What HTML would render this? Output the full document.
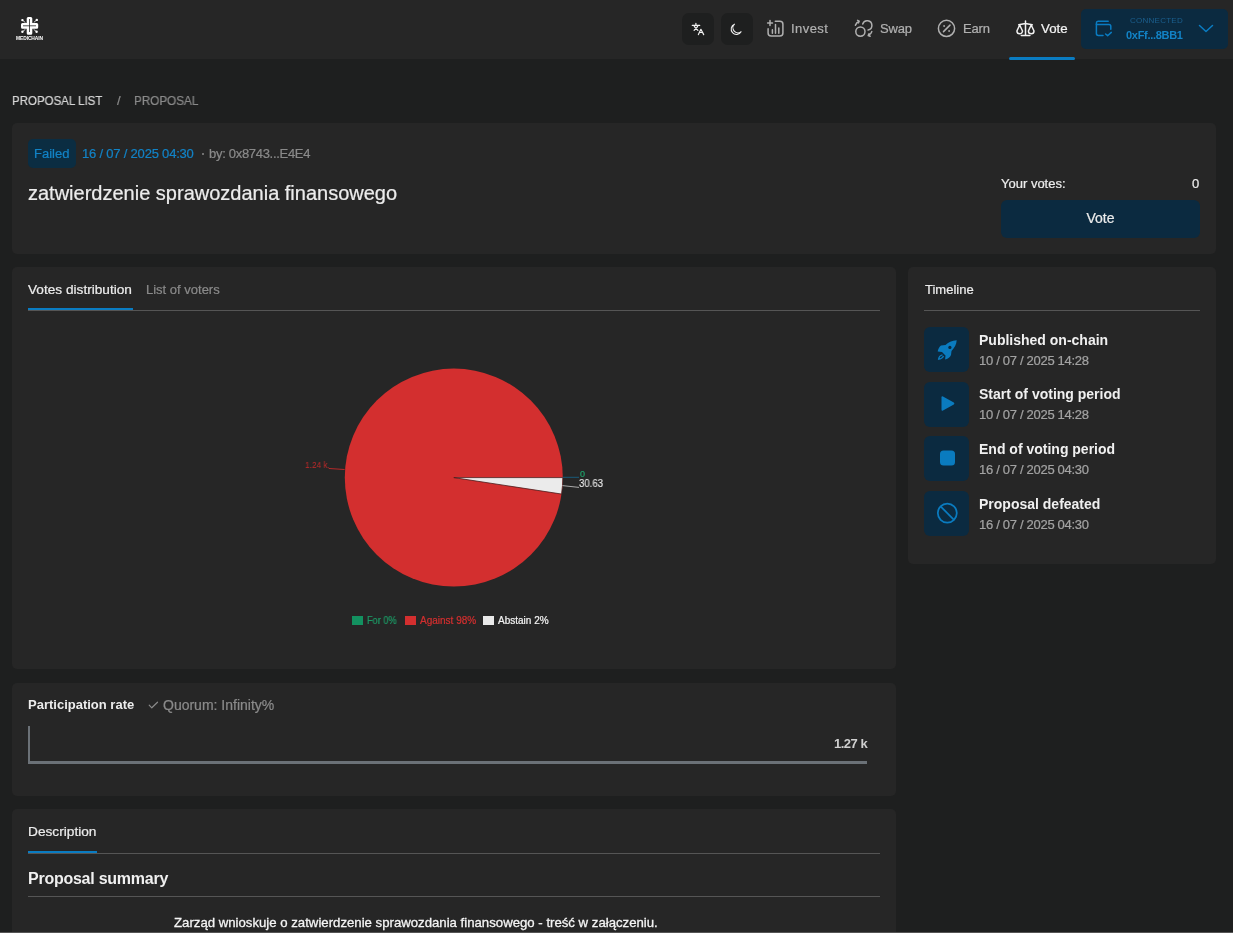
<!DOCTYPE html>
<html><head><meta charset="utf-8">
<style>
*{box-sizing:border-box;margin:0;padding:0}
html,body{width:1233px;height:933px;overflow:hidden;-webkit-font-smoothing:antialiased;background:#1e1f1f;font-family:"Liberation Sans",sans-serif;color:#e9e9e9}
.abs{position:absolute}
#hdr{position:absolute;left:0;top:0;width:1233px;height:59px;background:#262626}
.card{position:absolute;background:#262626;border-radius:5px}
.t{position:absolute;white-space:nowrap;line-height:1}
.sqbtn{position:absolute;top:13px;width:32px;height:32px;border-radius:7px;background:#1e1f1f}
.tlbox{position:absolute;left:924px;width:45px;height:44.5px;border-radius:6px;background:#0b2a40}
.tlt{position:absolute;left:979px;white-space:nowrap;line-height:1;font-size:14px;font-weight:bold;color:#f0f0f0}
.tld{position:absolute;left:979px;white-space:nowrap;line-height:1;font-size:13px;color:#a3a3a3;letter-spacing:-0.3px}
#ov{position:absolute;left:0;top:0}
body>*{will-change:transform}
.t,.tld{-webkit-text-stroke:0.22px currentColor}
.t[style*="bold"]{-webkit-text-stroke:0}
</style></head><body>
<div id="hdr"></div>
<div class="sqbtn" style="left:682px"></div>
<div class="sqbtn" style="left:721px"></div>
<div class="t" style="left:791px;top:22px;font-size:13px;color:#b0b0b0;letter-spacing:0.45px">Invest</div>
<div class="t" style="left:879.5px;top:21.5px;font-size:13px;color:#b0b0b0;letter-spacing:-0.2px">Swap</div>
<div class="t" style="left:963px;top:21.5px;font-size:13px;color:#b0b0b0;letter-spacing:-0.2px">Earn</div>
<div class="t" style="left:1041px;top:21.5px;font-size:13.3px;color:#f2f2f2">Vote</div>
<div class="abs" style="left:1009px;top:57.4px;width:66px;height:3.3px;background:#0a7cc2;border-radius:2px"></div>
<div class="abs" style="left:1081px;top:9px;width:147px;height:40px;background:#0b2a40;border-radius:5px"></div>
<div class="t" style="left:1130px;top:17px;font-size:8px;color:#1b5f8e;letter-spacing:0.25px;-webkit-text-stroke:0">CONNECTED</div>
<div class="t" style="left:1126px;top:29.6px;font-size:11px;font-weight:bold;color:#1283c6;letter-spacing:-0.3px">0xFf...8BB1</div>

<div class="t" style="left:12px;top:94px;font-size:13px;color:#d6d6d6;transform:scaleX(0.885);transform-origin:0 0">PROPOSAL LIST</div>
<div class="t" style="left:117px;top:94px;font-size:13px;color:#8a8a8a">/</div>
<div class="t" style="left:134px;top:94px;font-size:13px;color:#8a8a8a;transform:scaleX(0.9);transform-origin:0 0">PROPOSAL</div>

<!-- card 1 -->
<div class="card" style="left:12px;top:123px;width:1204px;height:131px"></div>
<div class="abs" style="left:28px;top:139px;width:48px;height:29px;background:#0b2d42;border-radius:5px"></div>
<div class="t" style="left:34px;top:147px;font-size:13px;color:#1283c6">Failed</div>
<div class="t" style="left:82px;top:147px;font-size:13px;color:#1283c6;letter-spacing:-0.2px">16 / 07 / 2025 04:30</div>
<div class="abs" style="left:201.8px;top:152.6px;width:2.4px;height:2.4px;border-radius:1px;background:#8a8a8a"></div>
<div class="t" style="left:209px;top:147px;font-size:13px;color:#8a8a8a;letter-spacing:-0.3px">by: 0x8743...E4E4</div>
<div class="t" style="left:28px;top:183px;font-size:20px;color:#ececec">zatwierdzenie sprawozdania finansowego</div>
<div class="t" style="left:1001px;top:177px;font-size:13px;color:#ececec">Your votes:</div>
<div class="t" style="left:1192px;top:177px;font-size:13px;color:#ececec">0</div>
<div class="abs" style="left:1001px;top:200px;width:199px;height:38px;background:#0b2a40;border-radius:6px"></div>
<div class="t" style="left:1001px;top:211px;width:199px;text-align:center;font-size:14px;color:#ececec">Vote</div>

<!-- card 2 -->
<div class="card" style="left:12px;top:267px;width:884px;height:402px"></div>
<div class="t" style="left:28px;top:283px;font-size:13px;color:#ececec;transform:scaleX(1.05);transform-origin:0 0">Votes distribution</div>
<div class="t" style="left:146px;top:283px;font-size:13px;color:#8a8a8a">List of voters</div>
<div class="abs" style="left:28px;top:310px;width:852px;height:1px;background:#555"></div>
<div class="abs" style="left:28px;top:308px;width:105px;height:2px;background:#0a7cc2"></div>
<div class="t" style="left:305.3px;top:459.8px;font-size:9.8px;color:#c02a2a;-webkit-text-stroke:0;transform:scaleX(0.85);transform-origin:0 0">1.24 k</div>
<div class="t" style="left:579.5px;top:470.2px;font-size:9px;color:#1fa06a">0</div>
<div class="t" style="left:578.7px;top:478.5px;font-size:10px;color:#eeeeee;-webkit-text-stroke:0.1px;transform:scaleX(0.96);transform-origin:0 0">30.63</div>
<div class="abs" style="left:352px;top:616px;width:11px;height:9px;background:#139160"></div>
<div class="t" style="left:366.5px;top:616px;font-size:10px;color:#1d9a66;transform:scaleX(0.92);transform-origin:0 0">For 0%</div>
<div class="abs" style="left:405px;top:616px;width:11px;height:9px;background:#d32f2f"></div>
<div class="t" style="left:419.5px;top:616px;font-size:10px;color:#d32f2f">Against 98%</div>
<div class="abs" style="left:483px;top:616px;width:11px;height:9px;background:#e9e9e9"></div>
<div class="t" style="left:497.8px;top:616px;font-size:10px;color:#f2f2f2">Abstain 2%</div>

<!-- card 3 timeline -->
<div class="card" style="left:908px;top:267px;width:308px;height:297px"></div>
<div class="t" style="left:925px;top:282.7px;font-size:13px;color:#ececec">Timeline</div>
<div class="abs" style="left:924px;top:310px;width:276px;height:1px;background:#555"></div>
<div class="tlbox" style="top:327px"></div>
<div class="tlbox" style="top:381.6px"></div>
<div class="tlbox" style="top:436.2px"></div>
<div class="tlbox" style="top:490.8px"></div>
<div class="tlt" style="top:332.75px">Published on-chain</div>
<div class="tld" style="top:353.7px">10 / 07 / 2025 14:28</div>
<div class="tlt" style="top:387.35px">Start of voting period</div>
<div class="tld" style="top:408.3px">10 / 07 / 2025 14:28</div>
<div class="tlt" style="top:441.95px">End of voting period</div>
<div class="tld" style="top:462.9px">16 / 07 / 2025 04:30</div>
<div class="tlt" style="top:496.55px">Proposal defeated</div>
<div class="tld" style="top:517.5px">16 / 07 / 2025 04:30</div>

<!-- card 4 -->
<div class="card" style="left:12px;top:683px;width:884px;height:113px"></div>
<div class="t" style="left:28px;top:697.7px;font-size:13px;font-weight:bold;color:#ececec">Participation rate</div>
<div class="t" style="left:163px;top:698.3px;font-size:14px;color:#8a8a8a">Quorum: Infinity%</div>
<div class="abs" style="left:28px;top:726px;width:2px;height:37.5px;background:#6b7177"></div>
<div class="abs" style="left:28px;top:761px;width:839px;height:2.5px;background:#6b7177"></div>
<div class="t" style="left:834px;top:736.7px;font-size:13px;font-weight:bold;color:#cfcfcf;letter-spacing:-0.5px">1.27 k</div>

<!-- card 5 -->
<div class="card" style="left:12px;top:809px;width:884px;height:200px"></div>
<div class="t" style="left:27.5px;top:825px;font-size:13.7px;color:#ececec">Description</div>
<div class="abs" style="left:28px;top:853px;width:852px;height:1px;background:#555"></div>
<div class="abs" style="left:28px;top:851px;width:69px;height:2px;background:#0a7cc2"></div>
<div class="t" style="left:28px;top:870.5px;font-size:16px;font-weight:bold;color:#f0f0f0;letter-spacing:-0.25px">Proposal summary</div>
<div class="abs" style="left:28px;top:896px;width:852px;height:1px;background:#555"></div>
<div class="t" style="left:174px;top:916px;font-size:13.2px;color:#f4f4f4;-webkit-text-stroke:0.3px #f4f4f4">Zarząd wnioskuje o zatwierdzenie sprawozdania finansowego - treść w załączeniu.</div>
<div class="abs" style="left:0;top:932px;width:1233px;height:1px;background:#555"></div>

<svg id="ov" width="1233" height="933" viewBox="0 0 1233 933">
  <!-- logo -->
  <g fill="#fff">
    <path d="M26.7 18.5q0-1.5 1.5-1.5h2.6q1.5 0 1.5 1.5v4.4h4.4q1.5 0 1.5 1.5v2.9q0 1.5-1.5 1.5h-4.4v4.5q0 1.5-1.5 1.5h-2.6q-1.5 0-1.5-1.5v-4.5h-4.2q-1.5 0-1.5-1.5v-2.9q0-1.5 1.5-1.5h4.2z"/>
    <circle cx="22.4" cy="20.1" r="1.2"/><circle cx="36.8" cy="19.9" r="1.2"/>
    <circle cx="22.4" cy="31.8" r="1.2"/><circle cx="36.6" cy="31.8" r="1.2"/>
  </g>
  <g stroke="#fff" stroke-width="0.8">
    <path d="M22.4 20.1l3 2.5M36.8 19.9l-3 2.5M22.4 31.8l3-2.5M36.6 31.8l-3-2.5"/>
  </g>
  <g stroke="#262626" stroke-width="0.8">
    <path d="M29.5 19v13M23 25.8h13"/>
  </g>
  <text x="29.5" y="40" font-size="4.9" font-weight="bold" fill="#fff" text-anchor="middle" font-family="Liberation Sans" letter-spacing="-0.1">MEDICHAIN</text>

  <!-- translate icon -->
  <g stroke="#f0f0f0" stroke-width="1.2" fill="none" stroke-linecap="round" stroke-linejoin="round">
    <path d="M695.9 23.3v2.1M692.3 25.4h7.4M694.3 26.5l3.6 3.9M697.6 26.5l-3.5 3.9"/>
    <path d="M698.4 34.6l2.5-5.3l2.8 5.3M699.3 32.5h3.3"/>
  </g>
  <!-- moon -->
  <path d="M734.5 24.2A5.3 5.3 0 1 0 741.1 31.7A5.0 5.0 0 0 1 734.5 24.2Z" stroke="#f0f0f0" stroke-width="1.05" fill="none" stroke-linejoin="round"/>

  <!-- invest icon -->
  <g stroke="#b0b0b0" stroke-width="1.5" fill="none" stroke-linecap="round" stroke-linejoin="round">
    <path d="M767.6 22.9h4.9M770 20.5v4.9"/>
    <path d="M775.3 21.2h4.6q3 0 3 3v8.7q0 3-3 3h-8.8q-3 0-3-3v-4.2"/>
    <path d="M772.4 29.7v3.5M775.5 24.6v8.6M778.8 28.1v5.1"/>
  </g>
  <!-- swap icon -->
  <g stroke="#b0b0b0" stroke-width="1.5" fill="none" stroke-linecap="round" stroke-linejoin="round">
    <circle cx="860.4" cy="31.6" r="4.6"/>
    <path d="M862.7 24A4.7 4.7 0 1 1 868.1 30"/>
    <path d="M855.4 25.3q1-3 3.8-4.1M857.6 20.4l1.6 0.8l-0.8 1.7"/>
    <path d="M871.8 31.6q-0.8 2.8-3.6 3.9M870.2 36.3l-2-0.8l0.9-1.8"/>
  </g>
  <!-- earn icon -->
  <g stroke="#b0b0b0" stroke-width="1.5" fill="none" stroke-linecap="round">
    <circle cx="946.5" cy="28.4" r="8.1"/>
    <path d="M943.5 31.6l6.5-6.5"/>
  </g>
  <circle cx="944.1" cy="26" r="0.9" fill="#b0b0b0"/><circle cx="949.1" cy="31" r="0.9" fill="#b0b0b0"/>
  <!-- vote icon (scale) -->
  <g stroke="#f2f2f2" stroke-width="1.5" fill="none" stroke-linecap="round" stroke-linejoin="round">
    <path d="M1021.3 35.6h8.6M1025.5 21v14.6M1018.8 24.8l6.7-1.4l6.7 1.4"/>
    <path d="M1022.5 31l-2.8-6l-2.8 6a2.8 2.8 0 0 0 5.6 0z"/>
    <path d="M1034 31l-2.8-6l-2.8 6a2.8 2.8 0 0 0 5.6 0z"/>
  </g>
  <!-- wallet -->
  <g stroke="#0a7cc2" stroke-width="1.5" fill="none" stroke-linecap="round" stroke-linejoin="round">
    <path d="M1108.2 21.2H1098Q1096.4 21.2 1096.4 23V33.5Q1096.4 35.4 1098.3 35.4H1103"/>
    <path d="M1096.4 24.55H1109Q1110.8 24.55 1110.8 26.3V29.2"/>
    <path d="M1105.6 34L1107.65 35.7L1111.3 32.4"/>
    <path d="M1199.5 25.5L1206 31.5L1212.5 25.5"/>
  </g>

  <!-- pie -->
  <circle cx="453.8" cy="477.6" r="109" fill="#d32f2f"/>
  <path d="M453.8 477.6L562.8 477.6A109 109 0 0 1 561.55 494.05Z" fill="#ebebeb" stroke="#4a1c1c" stroke-width="0.8"/>
  <path d="M562.8 477.3H579" stroke="#1a5a7a" stroke-width="1"/>
  <path d="M562.4 485.6L579 487.4" stroke="#aaaaaa" stroke-width="1"/>
  <path d="M328.1 467.3L329 468.5L344.6 469.5" stroke="#b52a2a" stroke-width="1" fill="none"/>

  <!-- timeline icons -->
  <g fill="#0a7bbf">
    <path d="M956.7 340.3C952 340.5 948 342.5 945.5 345L941 345.5C939.5 346.5 938 349 937.7 351.5L942 352L945.5 355.5L945.1 359.5C947.5 359 950 357.5 951 355L951.5 351C954.5 348 956.5 344.5 956.7 340.3Z"/>
    <path d="M941.5 397.5Q941.5 395.8 943 396.6L953.8 402.6Q955 403.6 953.8 404.4L943 410.6Q941.5 411.4 941.5 409.7Z"/>
    <rect x="940" y="450.6" width="15" height="15" rx="3.5"/>
  </g>
  <circle cx="949.9" cy="347.4" r="1.6" fill="#0b2a40"/>
  <path d="M942.5 354.8C940.3 355.3 938.8 357 938.6 359.2C940.8 359 942.6 357.8 943.6 356" stroke="#0a7bbf" stroke-width="1.3" fill="none"/>
  <g stroke="#0a7bbf" stroke-width="1.75" fill="none">
    <circle cx="947.3" cy="513.1" r="9.5"/>
    <path d="M940.6 506.4L954 519.8"/>
  </g>
  <!-- quorum check -->
  <path d="M149.2 705.2L151.8 707.8L157.5 702.2" stroke="#8a8a8a" stroke-width="1.2" fill="none" stroke-linecap="round" stroke-linejoin="round"/>
</svg>
</body></html>
